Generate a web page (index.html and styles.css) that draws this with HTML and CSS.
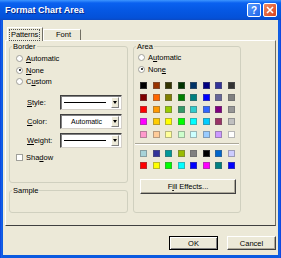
FILE: index.html
```html
<!DOCTYPE html>
<html lang="en">
<head>
    <meta charset="UTF-8">
    <title>Format Chart Area</title>
    <link rel="stylesheet" href="styles.css">
</head>
<body>
    <div class="window">
        <div class="titlebar">
            <span class="title">Format Chart Area</span>
            <div class="caption-buttons">
                <span class="cap-btn help">?</span>
                <span class="cap-btn close">
                    <svg width="8" height="8" viewBox="0 0 8 8"><path d="M1 1 L7 7 M7 1 L1 7" stroke="#fff" stroke-width="1.6"/></svg>
                </span>
            </div>
        </div>

        <div class="client">
            <div class="tabs">
                <div class="tab active"><span class="focus">Patterns</span></div>
                <div class="tab">Font</div>
            </div>

            <div class="panel">
                <div class="left-col">
                    <fieldset class="group border-group">
                        <legend>Border</legend>
                        <div class="radio-row"><span class="radio"></span><span><u>A</u>utomatic</span></div>
                        <div class="radio-row"><span class="radio checked"></span><span><u>N</u>one</span></div>
                        <div class="radio-row"><span class="radio"></span><span>C<u>u</u>stom</span></div>

                        <div class="fields">
                            <div class="field-row">
                                <span class="field-label"><u>S</u>tyle:</span>
                                <div class="combo"><span class="combo-value"><span class="line"></span></span><span class="combo-btn"></span></div>
                            </div>
                            <div class="field-row">
                                <span class="field-label"><u>C</u>olor:</span>
                                <div class="combo"><span class="combo-value text">Automatic</span><span class="combo-btn"></span></div>
                            </div>
                            <div class="field-row">
                                <span class="field-label"><u>W</u>eight:</span>
                                <div class="combo"><span class="combo-value"><span class="line"></span></span><span class="combo-btn"></span></div>
                            </div>
                        </div>

                        <div class="check-row"><span class="checkbox"></span><span>Sha<u>d</u>ow</span></div>
                    </fieldset>

                    <fieldset class="group sample-group">
                        <legend>Sample</legend>
                    </fieldset>
                </div>

                <fieldset class="group area-group">
                    <legend>Area</legend>
                    <div class="radio-row"><span class="radio"></span><span>A<u>u</u>tomatic</span></div>
                    <div class="radio-row"><span class="radio checked"></span><span>Non<u>e</u></span></div>

                    <div class="swatches" id="mainColors"></div>
                    <div class="separator"></div>
                    <div class="swatches" id="chartColors"></div>

                    <button class="btn fill-btn">F<u>i</u>ll Effects...</button>
                </fieldset>
            </div>

            <div class="dialog-buttons">
                <button class="btn default">OK</button>
                <button class="btn">Cancel</button>
            </div>
        </div>
    </div>

    <script>
        // Excel's standard palette, 8 colours per row
        const mainColors = [
            '#000000', '#993300', '#333300', '#003300', '#003366', '#000080', '#333399', '#333333',
            '#800000', '#ff6600', '#808000', '#008000', '#008080', '#0000ff', '#666699', '#808080',
            '#ff0000', '#ff9900', '#99cc00', '#339966', '#33cccc', '#3366ff', '#800080', '#969696',
            '#ff00ff', '#ffcc00', '#ffff00', '#00ff00', '#00ffff', '#00ccff', '#993366', '#c0c0c0',
            '#ff99cc', '#ffcc99', '#ffff99', '#ccffcc', '#ccffff', '#99ccff', '#cc99ff', '#ffffff'
        ];

        const chartColors = [
            '#a6d2d8', '#333399', '#009999', '#99bb00', '#808080', '#000000', '#0066cc', '#ccccff',
            '#ff0000', '#ffff00', '#00ff00', '#00ffff', '#0000ff', '#ff00ff', '#008080', '#0000ff'
        ];

        function fillSwatches(id, colors) {
            const box = document.getElementById(id);
            colors.forEach(color => {
                const swatch = document.createElement('span');
                swatch.className = 'swatch';
                swatch.style.background = color;
                box.appendChild(swatch);
            });
        }

        fillSwatches('mainColors', mainColors);
        fillSwatches('chartColors', chartColors);
    </script>
</body>
</html>
```

FILE: styles.css
```css
* {
    margin: 0;
    padding: 0;
    box-sizing: border-box;
}

body {
    font-family: 'Liberation Sans', Arial, sans-serif;
    font-size: 7.5px;
    color: #000;
    background: #fff;
}

.window {
    width: 281px;
    height: 258px;
    display: flex;
    flex-direction: column;
    background: linear-gradient(90deg, #0831d9 0, #1660e8 1px, #0a5ae0 3px, #0a5ae0 278px, #1660e8 280px, #0831d9 281px);
}

/* title bar */
.titlebar {
    height: 20px;
    display: flex;
    align-items: center;
    justify-content: space-between;
    padding: 0 4px 0 5px;
    background: linear-gradient(180deg, #3d95ff 0, #0a61f0 3px, #0558e4 50%, #0451d8 90%, #0a49c4 100%);
}

.title {
    color: #fff;
    font-size: 9px;
    font-weight: bold;
    text-shadow: 1px 1px 0 #0a2a8a;
}

.caption-buttons {
    display: flex;
    gap: 2px;
}

.cap-btn {
    width: 14px;
    height: 14px;
    border: 1px solid #fff;
    border-radius: 2px;
    display: flex;
    align-items: center;
    justify-content: center;
    color: #fff;
    font-size: 10px;
    font-weight: bold;
}

.help {
    background: linear-gradient(135deg, #5a9cff, #1d63e8);
}

.close {
    background: linear-gradient(135deg, #f08a62, #d9421c);
}

/* dialog client area */
.client {
    flex: 1;
    margin: 0 3px 3px;
    background: #ece9d8;
    display: flex;
    flex-direction: column;
}

.tabs {
    display: flex;
    align-items: flex-end;
    margin: 7px 0 0 4px;
    height: 13px;
}

.tab {
    height: 11px;
    width: 38px;
    padding-left: 12px;
    line-height: 10px;
    white-space: nowrap;
    border: 1px solid #fff;
    border-right-color: #716f64;
    border-bottom: none;
    background: #ece9d8;
}

.tab.active {
    height: 14px;
    width: 36px;
    padding: 1px 0 0 1px;
    margin-bottom: -1px;
    position: relative;
    border-right-color: #716f64;
}

.focus {
    display: inline-block;
    border: 1px dotted #555;
    padding: 0 1px;
    line-height: 10px;
    letter-spacing: -0.1px;
}

.panel {
    height: 186px;
    margin: 0 2px 0 2px;
    border: 1px solid #fff;
    border-right-color: #716f64;
    border-bottom-color: #404040;
    padding: 1px 3px 0 3px;
    display: grid;
    grid-template-columns: 119px 108px;
    column-gap: 5px;
    align-content: start;
}

.left-col {
    display: flex;
    flex-direction: column;
    gap: 3px;
}

/* group boxes */
.group {
    border: 1px solid #d0d0bf;
    border-radius: 3px;
    min-width: 0;
}

.group legend {
    line-height: 9px;
    padding: 0 1px;
}

.border-group {
    height: 141px;
    padding: 2px 4px 0 6px;
}

.border-group legend {
    margin-left: -4px;
}

.sample-group {
    height: 27px;
    padding: 0 4px 0 6px;
}

.sample-group legend {
    margin-left: -4px;
}

.area-group {
    height: 171px;
    padding: 1px 3px 0 4px;
}

.area-group legend {
    margin-left: -2px;
}

/* radio and check rows */
.radio-row,
.check-row {
    height: 11.5px;
    display: flex;
    align-items: center;
    gap: 3px;
}

.radio {
    width: 7px;
    height: 7px;
    border-radius: 50%;
    border: 1px solid #a0a09a;
    background: #fff;
    position: relative;
}

.radio.checked::after {
    content: '';
    position: absolute;
    left: 1.5px;
    top: 1.5px;
    width: 2px;
    height: 2px;
    border-radius: 50%;
    background: #000;
}

.checkbox {
    width: 7px;
    height: 7px;
    border: 1px solid #a0a09a;
    background: #fff;
}

.check-row {
    margin-top: 4px;
}

/* style / color / weight */
.fields {
    margin-top: 7px;
    display: flex;
    flex-direction: column;
    gap: 4px;
}

.field-row {
    display: flex;
    align-items: center;
    height: 15px;
}

.field-label {
    width: 44px;
    padding-left: 11px;
}

.combo {
    width: 62px;
    height: 15px;
    display: flex;
    align-items: center;
    background: #fff;
    border: 1px solid;
    border-color: #404040 #d4d0c8 #d4d0c8 #404040;
    box-shadow: inset 1px 1px 0 #808080;
    padding: 0 1px 0 3px;
}

.combo-value {
    flex: 1;
    display: flex;
    align-items: center;
}

.combo-value.text {
    padding-left: 7px;
    font-size: 7px;
}

.line {
    width: 42px;
    height: 1px;
    background: #000;
}

.combo-btn {
    width: 8px;
    height: 11px;
    margin-right: 1px;
    background: #ece9d8;
    border: 1px solid;
    border-color: #fff #808080 #808080 #fff;
    position: relative;
}

.combo-btn::after {
    content: '';
    position: absolute;
    left: 1px;
    top: 3px;
    border-left: 2.5px solid transparent;
    border-right: 2.5px solid transparent;
    border-top: 3px solid #000;
}

/* colour palette */
.swatches {
    display: grid;
    grid-template-columns: repeat(8, 7px);
    grid-auto-rows: 7px;
    column-gap: 5.5px;
    row-gap: 5.3px;
    margin-left: 2px;
}

#mainColors {
    margin-top: 6.5px;
}

.swatch {
    border: 1px solid rgba(96, 96, 96, 0.45);
}

.separator {
    margin: 5.5px 0 4.5px -3px;
    width: 104px;
    height: 2px;
    border-top: 1px solid #aca899;
    border-bottom: 1px solid #fff;
}

/* buttons */
.btn {
    font-family: inherit;
    font-size: 7.5px;
    color: #000;
    background: #ece9d8;
    border: 1px solid;
    border-color: #fff #404040 #404040 #fff;
    box-shadow: inset -1px -1px 0 #aca899;
    height: 14px;
}

.fill-btn {
    display: block;
    width: 96px;
    height: 15px;
    margin: 10px 0 0 2px;
}

.dialog-buttons {
    display: flex;
    justify-content: flex-end;
    gap: 9px;
    margin: 10px 2px 0 0;
}

.dialog-buttons .btn {
    width: 49px;
}

.btn.default {
    border: 1px solid #000;
    box-shadow: inset 1px 1px 0 #fff, inset -1px -1px 0 #808080;
}
```
